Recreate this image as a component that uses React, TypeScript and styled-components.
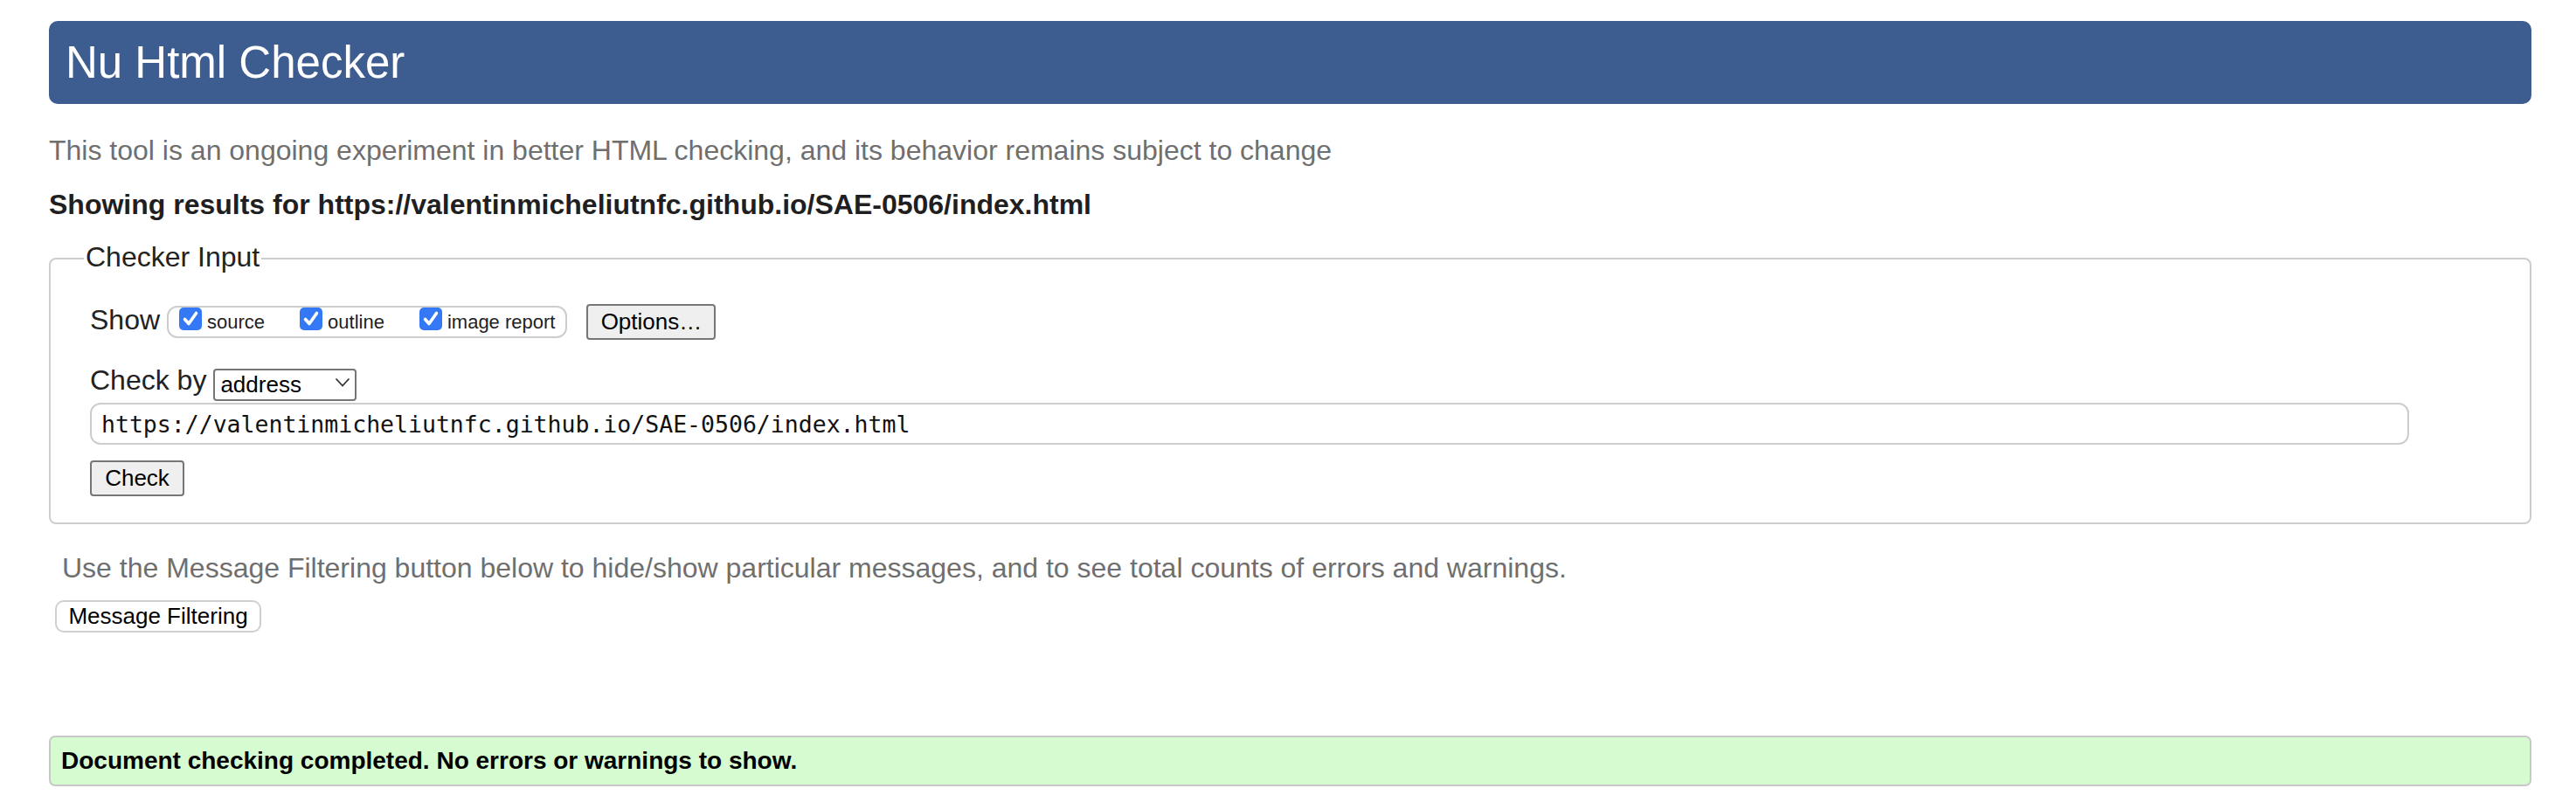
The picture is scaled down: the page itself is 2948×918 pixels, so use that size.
import React from "react";
import styled, { createGlobalStyle } from "styled-components";

const GlobalStyle = createGlobalStyle`
  html, body { margin: 0; padding: 0; background: #ffffff; }
  body {
    font-family: "Liberation Sans", Arial, Helvetica, sans-serif;
    color: #222222;
  }
`;

const SANS = `"Liberation Sans", Arial, Helvetica, sans-serif`;

const Page = styled.main`
  box-sizing: border-box;
  width: 2948px;
  padding: 24px 51px 16px 56px;
  font-size: 32px;
  line-height: 38px;
`;

const Header = styled.h1`
  box-sizing: border-box;
  margin: 0;
  height: 95px;
  display: flex;
  align-items: center;
  padding-left: 19px;
  background: #3d5c8f;
  border-radius: 10px;
  color: #ffffff;
  font-size: 51px;
  font-weight: normal;
  line-height: 51px;
`;

const Note = styled.p<{ $top: number; $indent?: number }>`
  margin: ${(p) => p.$top}px 0 0;
  padding-left: ${(p) => p.$indent ?? 0}px;
  color: #6f6f6f;
`;

const Results = styled.p`
  margin: 24px 0 0;
  font-weight: bold;
  color: #1f1f22;
`;

const Fieldset = styled.fieldset`
  margin: 22px 0 0;
  padding: 31px 45px 30px;
  border: 2px solid #cdcdcd;
  border-radius: 8px;
  min-width: 0;
`;

const Legend = styled.legend`
  margin-left: -7px;
  padding: 0 2px 4px;
  font-size: 32px;
  line-height: 38px;
  color: #222222;
`;

const Form = styled.div`
  display: flex;
  flex-direction: column;
  align-items: flex-start;
`;

const Row = styled.div<{ $h: number; $top?: number }>`
  display: flex;
  align-items: center;
  gap: 8px;
  height: ${(p) => p.$h}px;
  margin-top: ${(p) => p.$top ?? 0}px;
`;

const RowLabel = styled.span`
  margin-bottom: 6px;
  white-space: nowrap;
`;

const Group = styled.span`
  box-sizing: border-box;
  display: flex;
  align-items: flex-start;
  gap: 40px;
  height: 37px;
  padding: 0 12px;
  border: 2px solid #cdcdcd;
  border-radius: 12px;
`;

const CheckItem = styled.label`
  display: flex;
  align-items: flex-start;
  gap: 6px;
  font-size: 22px;
  line-height: 26px;
  color: #222222;
  white-space: nowrap;
`;

const CheckText = styled.span`
  margin-top: 4px;
`;

const Box = styled.span`
  flex: none;
  width: 26px;
  height: 26px;
  border-radius: 5px;
  background: #3478f6;
  display: flex;
  align-items: center;
  justify-content: center;
`;

const GrayButton = styled.button<{ $w: number; $ml?: number }>`
  box-sizing: border-box;
  width: ${(p) => p.$w}px;
  height: 41px;
  margin-left: ${(p) => p.$ml ?? 0}px;
  padding: 0;
  background: #efefef;
  border: 2px solid #767676;
  border-radius: 4px;
  font-family: ${SANS};
  font-size: 26px;
  color: #000000;
  flex: none;
`;

const CheckButton = styled(GrayButton)`
  margin-top: 18px;
`;

const SelectWrap = styled.span`
  position: relative;
  display: block;
  width: 164px;
  height: 37px;
`;

const Select = styled.select`
  box-sizing: border-box;
  appearance: none;
  -webkit-appearance: none;
  width: 100%;
  height: 100%;
  margin: 0;
  padding: 0 0 0 6px;
  background: #ffffff;
  border: 2px solid #767676;
  border-radius: 4px;
  font-family: ${SANS};
  font-size: 26px;
  color: #000000;
`;

const Chevron = styled.svg`
  position: absolute;
  right: 7px;
  top: 13px;
  pointer-events: none;
`;

const UrlInput = styled.input`
  box-sizing: border-box;
  width: 96.6%;
  height: 48px;
  margin-top: 5px;
  padding: 0 11px;
  border: 2px solid #cdcdcd;
  border-radius: 12px;
  background: #ffffff;
  font-family: "DejaVu Sans Mono", "Liberation Mono", monospace;
  font-size: 26.5px;
  color: #111111;
  outline: none;
`;

const FilterButton = styled.button`
  box-sizing: border-box;
  display: block;
  width: 236px;
  height: 37px;
  margin: 18px 0 0 7px;
  padding: 0;
  background: #ffffff;
  border: 2px solid #cfcfcf;
  border-radius: 10px;
  font-family: ${SANS};
  font-size: 26px;
  color: #000000;
`;

const Success = styled.div`
  box-sizing: border-box;
  display: flex;
  align-items: center;
  height: 58px;
  margin-top: 118px;
  padding-left: 12px;
  background: #d6fbd0;
  border: 2px solid #c8c8c8;
  border-radius: 7px;
  font-size: 28px;
  font-weight: bold;
  color: #000000;
`;

const Tick = () => (
  <svg width="26" height="26" viewBox="0 0 26 26" aria-hidden="true">
    <path
      d="M6.5 13.5 L11 18.5 L19.5 6.5"
      fill="none"
      stroke="#ffffff"
      strokeWidth="3.6"
      strokeLinecap="round"
      strokeLinejoin="round"
    />
  </svg>
);

const Option = ({ label }: { label: string }) => (
  <CheckItem>
    <Box>
      <Tick />
    </Box>
    <CheckText>{label}</CheckText>
  </CheckItem>
);

export default function App() {
  return (
    <>
      <GlobalStyle />
      <Page>
        <Header>Nu Html Checker</Header>
        <Note $top={34}>
          This tool is an ongoing experiment in better HTML checking, and its behavior remains subject to change
        </Note>
        <Results>Showing results for https://valentinmicheliutnfc.github.io/SAE-0506/index.html</Results>
        <Fieldset>
          <Legend>Checker Input</Legend>
          <Form>
            <Row $h={41}>
              <RowLabel>Show</RowLabel>
              <Group>
                <Option label="source" />
                <Option label="outline" />
                <Option label="image report" />
              </Group>
              <GrayButton $w={148} $ml={14} type="button">
                Options…
              </GrayButton>
            </Row>
            <Row $h={37} $top={30}>
              <RowLabel>Check by</RowLabel>
              <SelectWrap>
                <Select defaultValue="address">
                  <option value="address">address</option>
                  <option value="file">file upload</option>
                  <option value="text">text input</option>
                </Select>
                <Chevron width="18" height="11" viewBox="0 0 18 11" aria-hidden="true">
                  <polyline points="1.5,1.5 9,9.5 16.5,1.5" fill="none" stroke="#333333" strokeWidth="1.8" />
                </Chevron>
              </SelectWrap>
            </Row>
            <UrlInput
              type="url"
              defaultValue="https://valentinmicheliutnfc.github.io/SAE-0506/index.html"
              spellCheck={false}
            />
            <CheckButton $w={108} type="button">
              Check
            </CheckButton>
          </Form>
        </Fieldset>
        <Note $top={31} $indent={15}>
          Use the Message Filtering button below to hide/show particular messages, and to see total counts of errors and warnings.
        </Note>
        <FilterButton type="button">Message Filtering</FilterButton>
        <Success>Document checking completed. No errors or warnings to show.</Success>
      </Page>
    </>
  );
}
